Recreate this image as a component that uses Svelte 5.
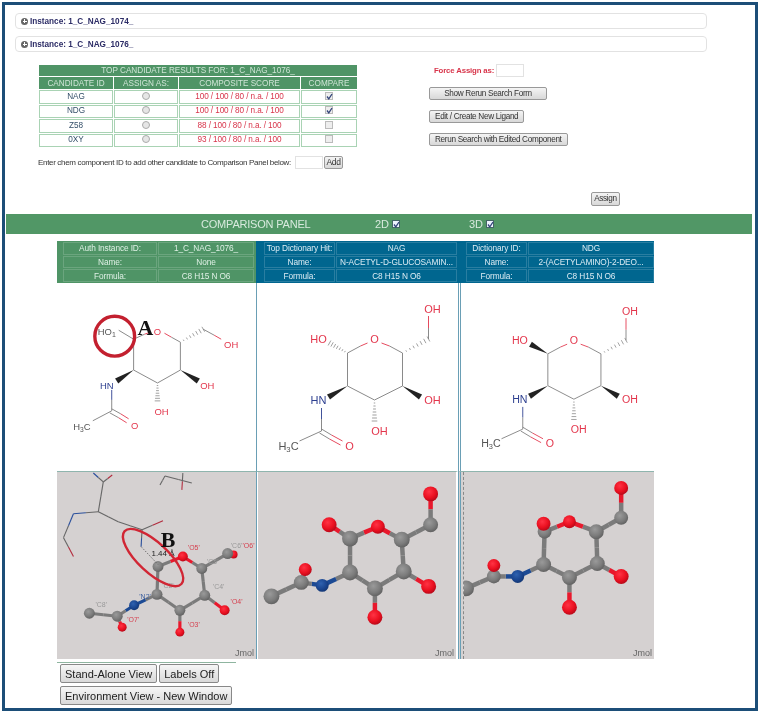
<script>
  const GREY = '#7d7d7d';
  const RED = '#e3364c';
  const BLUE = '#2d3f8f';

  const candidates = [
    { id: 'NAG', score: '100 / 100 / 80 / n.a. / 100', compare: true },
    { id: 'NDG', score: '100 / 100 / 80 / n.a. / 100', compare: true },
    { id: 'Z58', score: '88 / 100 / 80 / n.a. / 100', compare: false },
    { id: '0XY', score: '93 / 100 / 80 / n.a. / 100', compare: false }
  ];

  // hashed bond: short strokes across the line, growing towards the far end
  function hash(x1, y1, x2, y2, n = 7) {
    const out = [];
    const dx = x2 - x1, dy = y2 - y1;
    const len = Math.hypot(dx, dy);
    for (let i = 1; i <= n; i++) {
      const t = i / n;
      const w = 0.4 + t * 2.4;
      const px = x1 + dx * t, py = y1 + dy * t;
      const nx = -dy / len * w, ny = dx / len * w;
      out.push([px - nx, py - ny, px + nx, py + ny]);
    }
    return out;
  }

  function wedge(x1, y1, x2, y2, w = 3) {
    const dx = x2 - x1, dy = y2 - y1;
    const len = Math.hypot(dx, dy);
    const nx = -dy / len * w, ny = dx / len * w;
    return `${x1},${y1} ${x2 + nx},${y2 + ny} ${x2 - nx},${y2 - ny}`;
  }

  const dictBonds = [
    [90, 70, 103, 63, GREY], [103, 63, 110, 60, RED],
    [124, 60, 132, 63, RED], [132, 63, 145, 70, GREY],
    [145, 70, 145, 103, GREY], [145, 103, 117, 117, GREY],
    [117, 117, 90, 103, GREY], [90, 103, 90, 70, GREY],
    [171, 56, 171, 45, GREY], [171, 45, 171, 33, RED],
    [64, 125, 64, 136, BLUE], [64, 136, 64, 148, GREY],
    [64, 148, 42, 158, GREY],
    [64, 146, 74, 152, GREY], [74, 152, 85, 158, RED],
    [62, 150, 72, 156, GREY], [72, 156, 83, 162, RED]
  ];

  function dictLabels() {
    return [
      { t: 'O', x: 117, y: 60, c: RED }, { t: 'OH', x: 175, y: 30, c: RED },
      { t: 'HO', x: 61, y: 60, c: RED }, { t: 'HN', x: 61, y: 121, c: BLUE },
      { t: 'OH', x: 175, y: 121, c: RED }, { t: 'OH', x: 122, y: 152, c: RED },
      { t: 'O', x: 92, y: 167, c: RED }
    ];
  }

  const molecules = {
    query: {
      size: 9.5,
      bonds: [
        [77, 56, 88, 51, GREY], [88, 51, 94, 49, RED],
        [108, 50, 115, 54, RED], [115, 54, 124, 59, GREY],
        [124, 59, 124, 87, GREY], [124, 87, 101, 100, GREY],
        [101, 100, 77, 87, GREY], [77, 87, 77, 56, GREY],
        [62, 47, 77, 56, GREY],
        [147, 46, 158, 52, GREY], [158, 52, 165, 56, RED],
        [55, 107, 55, 117, BLUE], [55, 117, 55, 128, GREY],
        [55, 128, 36, 138, GREY],
        [55, 126, 64, 131, GREY], [64, 131, 72, 136, RED],
        [53, 130, 62, 135, GREY], [62, 135, 70, 140, RED]
      ],
      hashes: [...hash(124, 59, 147, 46), ...hash(101, 100, 101, 118)],
      wedges: [wedge(77, 87, 60, 98), wedge(124, 87, 142, 98)],
      labels: [
        { t: 'O', x: 101, y: 52, c: RED }, { t: 'OH', x: 175, y: 65, c: RED },
        { t: 'HN', x: 50, y: 106, c: BLUE }, { t: 'OH', x: 151, y: 106, c: RED },
        { t: 'OH', x: 105, y: 132, c: RED }, { t: 'O', x: 78, y: 146, c: RED }
      ],
      ho1: true,
      methyl: [25, 147]
    },
    nag: {
      size: 11,
      bonds: dictBonds,
      hashes: [...hash(145, 70, 171, 56), ...hash(117, 117, 117, 138), ...hash(90, 70, 72, 60)],
      wedges: [wedge(90, 103, 71, 114), wedge(145, 103, 163, 114)],
      labels: dictLabels(),
      methyl: [31, 167]
    },
    ndg: {
      size: 11,
      bonds: dictBonds,
      hashes: [...hash(145, 70, 171, 56), ...hash(117, 117, 117, 138)],
      wedges: [wedge(90, 103, 71, 114), wedge(145, 103, 163, 114), wedge(90, 70, 72, 60)],
      labels: dictLabels(),
      methyl: [31, 167]
    }
  };

  const chain = (a) => [
    [a.o6, a.c6], [a.c6, a.c5], [a.c5, a.o5], [a.o5, a.c1], [a.c1, a.o1], [a.c1, a.c2],
    [a.c2, a.c3], [a.c3, a.c4], [a.c4, a.c5], [a.c4, a.o4], [a.c3, a.o3], [a.c2, a.n],
    [a.n, a.cc], [a.cc, a.o7], [a.cc, a.c8]
  ].filter(([p, q]) => p && q);

  const balls = (a) => Object.entries(a).map(([k, p]) => ({
    x: p[0], y: p[1],
    kind: p[2],
    r: p[3]
  }));

  const G = 'grey', R = 'red', N = 'blue';

  const modelA = {
    o6: [177, 83, R, 4], c6: [171, 82, G, 5.5], c5: [145, 97, G, 5.5], o5: [126, 85, R, 5],
    c1: [101, 95, G, 5.5], c2: [100, 123, G, 5.5], c3: [123, 139, G, 5.5], c4: [148, 124, G, 5.5],
    o4: [168, 139, R, 5], o3: [123, 161, R, 4.5], n: [77, 134, N, 5], cc: [60, 145, G, 5.5],
    o7: [65, 156, R, 4.5], c8: [32, 142, G, 5.5]
  };
  const modelB = {
    o6: [174, 22, R, 7.5], c6: [174, 53, G, 7.5], c5: [145, 68, G, 8], o5: [121, 55, R, 7],
    c1: [93, 67, G, 8], o1: [72, 53, R, 7.5], c2: [93, 101, G, 8], c3: [118, 117, G, 8],
    c4: [147, 100, G, 8], o4: [172, 115, R, 7.5], o3: [118, 146, R, 7.5], n: [65, 114, N, 6.5],
    cc: [44, 111, G, 7.5], o7: [48, 98, R, 6.5], c8: [14, 125, G, 8]
  };
  const modelC = {
    o6: [163, 16, R, 7], c6: [163, 46, G, 7], c5: [138, 60, G, 7.5], o5: [111, 50, R, 6.5],
    c1: [86, 60, G, 7], c2: [85, 93, G, 7.5], c3: [111, 106, G, 7.5], c4: [139, 92, G, 7.5],
    o1: [85, 52, R, 7], o4: [163, 105, R, 7.5], o3: [111, 136, R, 7.5], n: [59, 105, N, 6.5],
    cc: [35, 105, G, 7], o7: [35, 94, R, 6.5], c8: [7, 117, G, 8]
  };

  const colour = { grey: '#7b7b7b', red: '#e8182c', blue: '#1c4a94' };

  const wires = [
    [[36, 1, '#2a4f9c'], [46, 10, '#666']], [[55, 3, '#b22a3c'], [46, 10, '#666']],
    [[46, 10, '#666'], [41, 40, '#666']], [[41, 40, '#666'], [16, 42, '#2a4f9c']],
    [[16, 42, '#2a4f9c'], [6, 66, '#666']], [[6, 66, '#666'], [16, 85, '#b22a3c']],
    [[41, 40, '#666'], [61, 50, '#666']], [[61, 50, '#666'], [85, 58, '#666']],
    [[85, 58, '#666'], [106, 49, '#b22a3c']], [[85, 58, '#666'], [84, 75, '#2a4f9c']],
    [[103, 13, '#666'], [108, 4, '#666']], [[108, 4, '#666'], [135, 11, '#666']],
    [[126, 1, '#666'], [125, 18, '#b22a3c']]
  ];

  const atomLabels = [
    { t: "'O5'", x: 137, y: 78, c: '#d5404f' }, { t: "'C6'", x: 180, y: 76, c: '#999' },
    { t: "'O6'", x: 192, y: 76, c: '#d5404f' },
    { t: "'C2'", x: 111, y: 117, c: '#999' }, { t: "'C4'", x: 162, y: 118, c: '#999' },
    { t: "'O4'", x: 180, y: 133, c: '#d5404f' }, { t: "'O3'", x: 137, y: 156, c: '#d5404f' },
    { t: "'N2'", x: 88, y: 128, c: '#3c5f9e' }, { t: "'C8'", x: 44, y: 136, c: '#999' },
    { t: "'O7'", x: 76, y: 151, c: '#d5404f' }, { t: "'C5'", x: 156, y: 92, c: '#999' }
  ];
</script>

{#snippet tick(checked)}
  <span class="tick" class:on={checked}>
    {#if checked}
      <svg width="9" height="9" viewBox="0 0 9 9"><path d="M2 4.5 L3.8 6.8 L7 2" fill="none" stroke="#33447a" stroke-width="1.3" /></svg>
    {/if}
  </span>
{/snippet}

{#snippet molecule(m)}
  <svg class="mol" viewBox="0 0 200 188">
    {#each m.bonds as b}
      <line x1={b[0]} y1={b[1]} x2={b[2]} y2={b[3]} stroke={b[4]} stroke-width="0.9" />
    {/each}
    {#each m.hashes as h}
      <line x1={h[0]} y1={h[1]} x2={h[2]} y2={h[3]} stroke="#777" stroke-width="0.7" />
    {/each}
    {#each m.wedges as w}
      <polygon points={w} fill="#222" />
    {/each}
    {#each m.labels as l}
      <text x={l.x} y={l.y} font-size={m.size} fill={l.c} text-anchor="middle">{l.t}</text>
    {/each}
    <text x={m.methyl[0]} y={m.methyl[1]} font-size={m.size} fill="#555" text-anchor="middle">H<tspan font-size={m.size * 0.7} dy="2">3</tspan><tspan dy="-2">C</tspan></text>
    {#if m.ho1}
      <text x="50" y="52" font-size={m.size} fill="#555" text-anchor="middle">HO<tspan font-size="7" dy="2">1</tspan></text>
      <ellipse cx="58" cy="53" rx="20" ry="20" fill="none" stroke="#c3202f" stroke-width="3.4" />
      <text x="81" y="52" font-size="22" font-weight="bold" class="letter">A</text>
    {/if}
  </svg>
{/snippet}

{#snippet ballstick(a, extra)}
  {@const list = balls(a)}
  {#each chain(a) as [p, q]}
    <line x1={p[0]} y1={p[1]} x2={(p[0] + q[0]) / 2} y2={(p[1] + q[1]) / 2} stroke={colour[p[2]]} stroke-width={extra} />
    <line x1={(p[0] + q[0]) / 2} y1={(p[1] + q[1]) / 2} x2={q[0]} y2={q[1]} stroke={colour[q[2]]} stroke-width={extra} />
  {/each}
  {#each list as b}
    <circle cx={b.x} cy={b.y} r={b.r} fill="url(#ball-{b.kind})" />
  {/each}
{/snippet}

<svg class="defs" width="0" height="0" aria-hidden="true">
  <defs>
    <radialGradient id="ball-grey" cx="0.4" cy="0.35" r="0.7"><stop offset="0" stop-color="#9a9a9a" /><stop offset="0.6" stop-color="#7c7c7c" /><stop offset="1" stop-color="#5e5e5e" /></radialGradient>
    <radialGradient id="ball-red" cx="0.4" cy="0.35" r="0.7"><stop offset="0" stop-color="#ff3344" /><stop offset="0.6" stop-color="#ea1020" /><stop offset="1" stop-color="#b00818" /></radialGradient>
    <radialGradient id="ball-blue" cx="0.4" cy="0.35" r="0.7"><stop offset="0" stop-color="#2f62b0" /><stop offset="0.6" stop-color="#1b4690" /><stop offset="1" stop-color="#123470" /></radialGradient>
  </defs>
</svg>

<div class="frame">
  <div class="accordion"><span class="plus"></span>Instance: 1_C_NAG_1074_</div>
  <div class="accordion second"><span class="plus"></span>Instance: 1_C_NAG_1076_</div>

  <div class="controls">
    <div class="left">
      <table class="results">
        <colgroup>
          <col class="c1" /><col class="c2" /><col class="c3" /><col class="c4" />
        </colgroup>
        <thead>
          <tr><th colspan="4" class="caption">TOP CANDIDATE RESULTS FOR: 1_C_NAG_1076_</th></tr>
          <tr>
            <th>CANDIDATE ID</th>
            <th>ASSIGN AS:</th>
            <th>COMPOSITE SCORE</th>
            <th>COMPARE</th>
          </tr>
        </thead>
        <tbody>
          {#each candidates as row}
            <tr>
              <td>{row.id}</td>
              <td><span class="radio"></span></td>
              <td class="score">{row.score}</td>
              <td>{@render tick(row.compare)}</td>
            </tr>
          {/each}
        </tbody>
      </table>
      <div class="add-row">
        <span>Enter chem component ID to add other candidate to Comparison Panel below:</span>
        <input type="text" class="field" />
        <button class="small add">Add</button>
      </div>
    </div>
    <div class="right">
      <div class="force"><span>Force Assign as:</span><input type="text" class="field" /></div>
      <button class="small wide">Show Rerun Search Form</button>
      <button class="small">Edit / Create New Ligand</button>
      <button class="small">Rerun Search with Edited Component</button>
    </div>
  </div>

  <div class="assign-row"><button class="small assign">Assign</button></div>

  <div class="banner">
    <span class="banner-title">COMPARISON PANEL</span>
    <span class="banner-2d">2D {@render tick(true)}</span>
    <span class="banner-3d">3D {@render tick(true)}</span>
  </div>

  <div class="panel">
    <section class="col first">
      <div class="head green">
        <span>Auth Instance ID:</span><span>1_C_NAG_1076_</span>
        <span>Name:</span><span>None</span>
        <span>Formula:</span><span>C8 H15 N O6</span>
      </div>
      <div class="two-d">{@render molecule(molecules.query)}</div>
      <div class="three-d">
        <svg viewBox="0 0 199 188" class="model">
          {#each wires as [p, q]}
            <line x1={p[0]} y1={p[1]} x2={(p[0] + q[0]) / 2} y2={(p[1] + q[1]) / 2} stroke={p[2]} stroke-width="1.1" />
            <line x1={(p[0] + q[0]) / 2} y1={(p[1] + q[1]) / 2} x2={q[0]} y2={q[1]} stroke={q[2]} stroke-width="1.1" />
          {/each}
          {@render ballstick(modelA, 3.2)}
          <line x1="84" y1="75" x2="101" y2="93" stroke="#555" stroke-width="0.8" stroke-dasharray="1.5 1.5" />
          {#each atomLabels as l}
            <text x={l.x} y={l.y} font-size="7" fill={l.c} text-anchor="middle">{l.t}</text>
          {/each}
          <text x="106" y="84" font-size="8" fill="#222" text-anchor="middle">1.44 Å</text>
          <ellipse cx="96" cy="86" rx="39" ry="15" transform="rotate(43 96 86)" fill="none" stroke="#d12634" stroke-width="2.4" />
          <text x="111" y="75" font-size="22" font-weight="bold" text-anchor="middle" class="letter">B</text>
        </svg>
        <span class="jmol">Jmol</span>
      </div>
    </section>

    <section class="col second-col">
      <div class="head blue hit">
        <span>Top Dictionary Hit:</span><span>NAG</span>
        <span>Name:</span><span>N-ACETYL-D-GLUCOSAMIN...</span>
        <span>Formula:</span><span>C8 H15 N O6</span>
      </div>
      <div class="two-d">{@render molecule(molecules.nag)}</div>
      <div class="three-d">
        <svg viewBox="0 0 199 188" class="model">{@render ballstick(modelB, 4.5)}</svg>
        <span class="jmol">Jmol</span>
      </div>
    </section>

    <section class="col third">
      <div class="head blue dict">
        <span>Dictionary ID:</span><span>NDG</span>
        <span>Name:</span><span>2-(ACETYLAMINO)-2-DEO...</span>
        <span>Formula:</span><span>C8 H15 N O6</span>
      </div>
      <div class="two-d">{@render molecule(molecules.ndg)}</div>
      <div class="three-d">
        <div class="clip"><svg viewBox="5 0 191 188" class="model">{@render ballstick(modelC, 4.5)}</svg></div>
        <span class="jmol">Jmol</span>
      </div>
    </section>
  </div>

  <div class="viewer-buttons">
    <div class="rule"></div>
    <div class="line">
      <button class="big">Stand-Alone View</button>
      <button class="big">Labels Off</button>
    </div>
    <button class="big">Environment View - New Window</button>
  </div>
</div>

<style>
  :global(body) {
    margin: 0;
    background: #fff;
  }

  .defs {
    display: block;
  }

  .frame {
    box-sizing: border-box;
    width: 756px;
    height: 709px;
    margin: 2px 0 0 2px;
    border: 3px solid #1c4e78;
    font-family: "Liberation Sans", Arial, sans-serif;
    color: #333;
    overflow: hidden;
    filter: blur(0.25px);
  }

  .accordion {
    display: flex;
    align-items: center;
    gap: 2px;
    box-sizing: border-box;
    width: 692px;
    height: 16px;
    margin: 8px 0 0 10px;
    padding-left: 5px;
    border: 1px solid #e2e2e2;
    border-radius: 4px;
    font-size: 8.2px;
    font-weight: bold;
    color: #2c2c66;
  }

  .accordion.second {
    margin-top: 7px;
  }

  .plus {
    position: relative;
    width: 7px;
    height: 7px;
    border-radius: 50%;
    background: #666;
  }

  .plus::before, .plus::after {
    content: "";
    position: absolute;
    background: #fff;
  }

  .plus::after {
    left: 1.5px;
    top: 3px;
    width: 4px;
    height: 1px;
  }

  .plus::before {
    left: 3px;
    top: 1.5px;
    width: 1px;
    height: 4px;
  }

  .controls {
    display: flex;
    margin: 13px 0 0 34px;
  }

  .left {
    width: 320px;
  }

  .results {
    border-collapse: separate;
    border-spacing: 1px;
    width: 320px;
    table-layout: fixed;
    margin: -1px;
    font-size: 8.2px;
    white-space: nowrap;
  }

  .results th {
    background: #4f9466;
    color: #cfe5d6;
    font-weight: normal;
    height: 12px;
    padding: 0;
  }

  .results .caption {
    height: 11px;
  }

  .c1 { width: 74px; }
  .c2 { width: 64px; }
  .c3 { width: 121px; }

  .results td {
    box-sizing: border-box;
    height: 13.5px;
    padding: 0;
    border: 1px solid #a9d3b4;
    text-align: center;
    color: #35506a;
    line-height: 10px;
  }

  .results td.score {
    color: #d8344a;
    letter-spacing: -0.1px;
  }

  .radio {
    display: inline-block;
    box-sizing: border-box;
    width: 8px;
    height: 8px;
    border: 1px solid #aaa;
    border-radius: 50%;
    background: #e6e6e6;
    vertical-align: -1px;
  }

  .tick {
    display: inline-block;
    box-sizing: border-box;
    width: 8px;
    height: 8px;
    border: 1px solid #bbb;
    background: #eee;
    vertical-align: -1px;
    line-height: 0;
  }

  .tick svg {
    margin: -1px;
  }

  .add-row {
    display: flex;
    align-items: center;
    margin-top: 9px;
    margin-left: -1px;
    font-size: 8px;
    letter-spacing: -0.33px;
    white-space: nowrap;
  }

  .field {
    box-sizing: border-box;
    width: 28px;
    height: 13px;
    margin: 0 1px 0 4px;
    padding: 0;
    border: 1px solid #e2e2e2;
    background: #fff;
  }

  .small {
    box-sizing: border-box;
    height: 13px;
    padding: 1px 5px 0;
    border: 1px solid #999;
    border-radius: 2px;
    background: linear-gradient(#f4f4f4, #d8d8d8);
    font-family: inherit;
    font-size: 8.2px;
    letter-spacing: -0.32px;
    color: #333;
    white-space: nowrap;
    line-height: 1;
  }

  .add {
    width: 19px;
    padding: 0;
    font-size: 8.5px;
  }

  .right {
    display: flex;
    flex-direction: column;
    align-items: flex-start;
    gap: 10px;
    margin-left: 70px;
    margin-top: -1px;
  }

  .force {
    display: flex;
    align-items: center;
    margin-left: 5px;
    height: 13px;
    font-size: 7.8px;
    font-weight: bold;
    letter-spacing: -0.15px;
    color: #d8344a;
  }

  .force .field {
    margin: 0 0 0 2px;
  }

  .wide {
    width: 118px;
  }

  .assign-row {
    display: flex;
    margin: 23px 0 0 586px;
  }

  .assign {
    width: 29px;
    padding: 0;
    height: 14px;
  }

  .banner {
    display: flex;
    align-items: center;
    width: 746px;
    height: 20px;
    margin: 8px 0 0 1px;
    background: #519766;
    color: #d8eade;
    font-size: 11px;
    letter-spacing: -0.2px;
    white-space: nowrap;
  }

  .banner-title {
    margin-left: 195px;
    width: 174px;
  }

  .banner-2d {
    width: 94px;
  }

  .banner .tick {
    background: #eef3ff;
    border-color: #466;
    vertical-align: 0;
  }

  .panel {
    display: grid;
    grid-template-columns: 199px 202px 196px;
    margin: 7px 0 0 52px;
    width: 597px;
  }

  .col {
    display: flex;
    flex-direction: column;
    min-width: 0;
  }

  .head {
    display: grid;
    box-sizing: border-box;
    height: 42px;
    padding: 1px 2px 1px 6px;
    gap: 1px;
    grid-auto-rows: 1fr;
    color: #dff0e5;
    font-size: 8.3px;
    letter-spacing: -0.1px;
    text-align: center;
    white-space: nowrap;
  }

  .head span {
    display: flex;
    align-items: center;
    justify-content: center;
    overflow: hidden;
    outline: 1px solid rgba(255, 255, 255, 0.16);
    outline-offset: -1px;
  }

  .head.green {
    background: #4f9466;
    grid-template-columns: 94px 96px;
  }

  .head.blue {
    background: #00668f;
    color: #dcecf4;
  }

  .hit {
    padding-left: 8px;
    padding-right: 1px;
    grid-template-columns: 71px 121px;
  }

  .dict {
    padding-left: 8px;
    padding-right: 0;
    grid-template-columns: 61px 126px;
  }

  .two-d {
    box-sizing: border-box;
    height: 188px;
    border-left: 1px solid #6a9fb5;
    background: #fff;
  }

  .first .two-d {
    border-left: 0;
  }

  .third .two-d {
    border-left: 3px double #6a9fb5;
  }

  .mol, .model {
    display: block;
    width: 100%;
    height: 100%;
  }

  .mol text, .model text {
    font-family: "Liberation Sans", Arial, sans-serif;
  }

  .mol text.letter, .model text.letter {
    font-family: "Liberation Serif", serif;
    fill: #111;
  }

  .three-d {
    position: relative;
    box-sizing: border-box;
    height: 188px;
    border-top: 1px solid #8fb5ae;
    border-left: 1px solid #6a9fb5;
    background: #d5d1d1;
    overflow: hidden;
  }

  .first .three-d {
    border-left: 0;
  }

  .second-col .three-d {
    border-right: 2px solid #fff;
    box-shadow: inset 1px 0 0 #fff;
  }

  .third .three-d {
    border-left: 3px double #6a9fb5;
  }

  .clip {
    height: 100%;
    margin-left: 2px;
    border-left: 1px dashed #888;
    overflow: hidden;
  }

  .jmol {
    position: absolute;
    right: 2px;
    bottom: 1px;
    font-size: 9px;
    color: #666;
  }

  .viewer-buttons {
    display: flex;
    flex-direction: column;
    align-items: flex-start;
    gap: 3px;
    margin: 3px 0 0 55px;
  }

  .rule {
    width: 179px;
    height: 1px;
    margin: 0 0 -2px -3px;
    background: #8fb5a0;
  }

  .line {
    display: flex;
    gap: 2px;
  }

  .big {
    box-sizing: border-box;
    height: 19px;
    padding: 0 4px;
    border: 1px solid #888;
    border-radius: 2px;
    background: linear-gradient(#f6f6f6, #d9d9d9);
    font-family: inherit;
    font-size: 11px;
    color: #222;
    white-space: nowrap;
  }
</style>
